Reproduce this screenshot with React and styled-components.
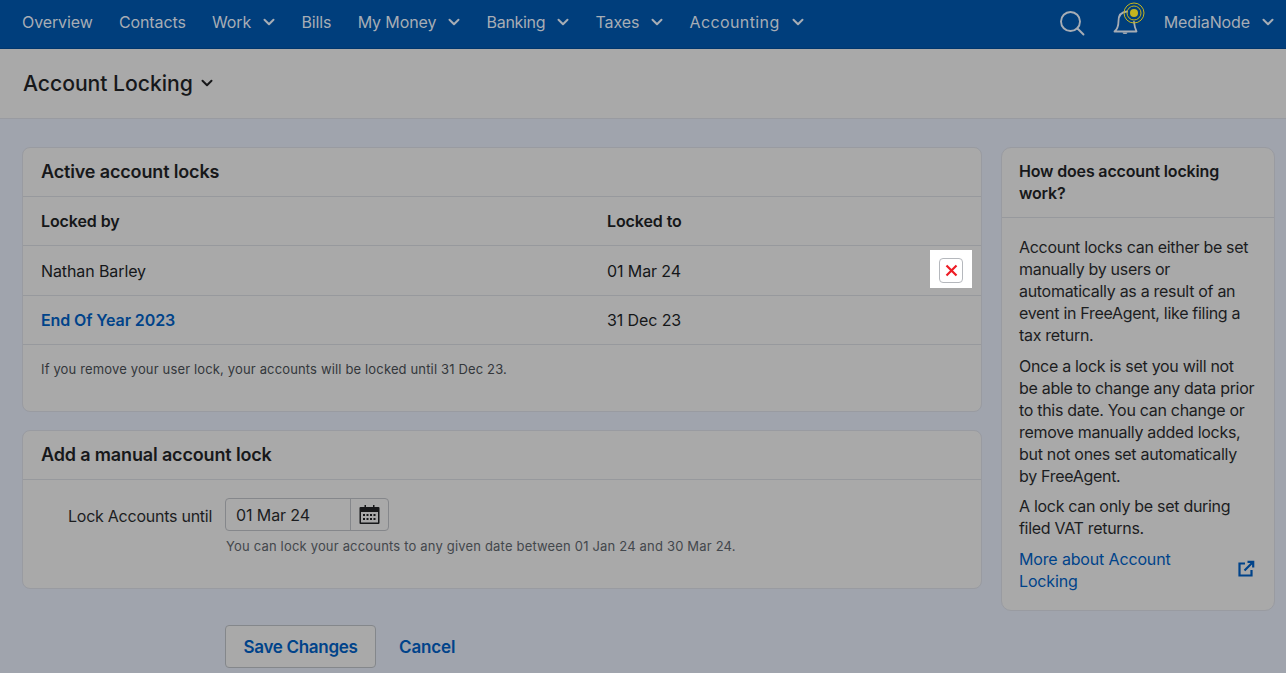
import React from "react";
import styled, { createGlobalStyle } from "styled-components";

const Global = createGlobalStyle`
  html, body { margin: 0; padding: 0; }
  body { background: #a0a4ad; font-family: Inter, "Liberation Sans", sans-serif; color: #151719; }
  * { box-sizing: border-box; }
`;
const Page = styled.div`width: 1286px; height: 673px; overflow: hidden; background: #a0a4ad;`;
const Nav = styled.nav`height: 49px; background: #003e7c; border-bottom: 1px solid #00366d; display: flex; align-items: center; padding: 0 12px 0 22px; color: #a7adb5; font-size: 16px; letter-spacing: -0.1px;`;
const NavItems = styled.div`display: flex; gap: 26.2px; flex: 1; align-items: center;`;
const NavItem = styled.span`display: inline-flex; align-items: center; gap: 12px; margin-top: -4px; letter-spacing: ${p => p.$track ?? -0.1}px;`;
const Chevron = styled.svg`width: ${p => p.$size || 12}px; height: ${p => p.$size || 12}px; flex: none;`;
const NavRight = styled.div`display: flex; align-items: center;`;
const SearchIcon = styled.svg`width: 26px; height: 26px; margin-top: -3px;`;
const Bell = styled.svg`width: 34px; height: 34px; margin: -14px 19px 0 26px;`;
const TitleBar = styled.header`height: 70px; background: #a9a9a9; border-bottom: 1px solid #999ba1; display: flex; align-items: center; padding: 0 22px 1px; gap: 8px;`;
const PageTitle = styled.h1`margin: 0; font-size: 21.2px; font-weight: 500; letter-spacing: -0.05px; color: #17181a; padding-left: 1px;`;
const Content = styled.main`display: grid; grid-template-columns: 960px 274px; gap: 19px; padding: 28px 0 0 22px; align-items: start;`;
const Column = styled.div`display: flex; flex-direction: column; gap: 18px;`;
const Card = styled.section`background: #a9a9a9; border: 1px solid #999ba1; border-radius: 8px; position: relative;`;
const CardTitle = styled.h2`margin: 0; height: 49px; padding: 0 18px 2px; display: flex; align-items: center; font-size: 18px; font-weight: 600; letter-spacing: -0.15px; color: #17181a; border-bottom: 1px solid #97999d;`;
const Row = styled.div`height: ${p => p.$h || 50}px; display: grid; grid-template-columns: 566px 1fr; align-items: center; padding: 0 18px; font-size: 16px; letter-spacing: -0.1px; border-bottom: 1px solid #97999d; position: relative; font-weight: ${p => p.$head ? 600 : 400};`;
const LockLink = styled.a`color: #00438a; font-weight: 600;`;
const Spotlight = styled.div`position: absolute; left: 907px; top: 4px; width: 42px; height: 38px; background: #fff; display: flex; padding: 8px 0 0 9px; z-index: 2;`;
const RemoveBtn = styled.button`width: 24px; height: 25px; padding: 0; background: #fff; border: 1px solid #b5b8bd; border-radius: 4px; display: flex; align-items: center; justify-content: center;`;
const Note = styled.p`margin: 0; padding: 16px 18px 34px; font-size: 13px; line-height: 16px; height: 66px; color: #33373b; letter-spacing: 0.15px;`;
const FormRow = styled.div`display: flex; padding: 18px 0 0 45px; height: 108px; align-items: flex-start;`;
const FieldLabel = styled.label`width: 157px; font-size: 16px; line-height: 36px; letter-spacing: -0.25px; color: #1c1d1f;`;
const FieldCol = styled.div`display: flex; flex-direction: column; gap: 7px;`;
const DateField = styled.div`width: 164px; height: 33px; border: 1px solid #85878b; border-radius: 4px; display: flex; align-items: center; font-size: 16px;`;
const DateValue = styled.span`flex: 1; padding-left: 10px; height: 100%; display: flex; align-items: center; border-right: 1px solid #85878b; color: #1c1d1f; letter-spacing: -0.1px;`;
const CalIcon = styled.svg`width: 37px; height: 21px;`;
const Hint = styled.div`font-size: 13px; line-height: 16px; color: #43474c; white-space: nowrap; letter-spacing: 0.18px; padding-left: 1px;`;
const Actions = styled.div`display: flex; align-items: center; gap: 23px; padding: 18px 0 0 203px;`;
const SaveBtn = styled.button`width: 151px; height: 43px; background: #a9a9a9; border: 1px solid #84878b; border-radius: 4px; color: #00438a; font: 600 17px Inter, sans-serif; letter-spacing: -0.3px;`;
const Cancel = styled.a`color: #00438a; font-size: 17px; font-weight: 600; letter-spacing: -0.15px;`;
const Side = styled.aside`background: #a9a9a9; border: 1px solid #999ba1; border-radius: 10px;`;
const SideTitle = styled.h3`margin: 0; padding: 12px 17px 13px; font-size: 16px; line-height: 22px; font-weight: 600; letter-spacing: -0.17px; color: #17181a; border-bottom: 1px solid #97999d;`;
const SideBody = styled.div`padding: 18px 18px 18px 17px; font-size: 16px; line-height: 22px; letter-spacing: -0.3px; color: #1c1d1f;`;
const Para = styled.p`margin: 0 0 8.5px;`;
const MoreRow = styled.div`display: flex; justify-content: space-between; align-items: center; color: #00438a; margin-top: 9px;`;
const MoreText = styled.span`width: 190px; letter-spacing: -0.15px;`;
const ExtIcon = styled.svg`width: 18px; height: 18px; margin: -3px 1px 0 0;`;

const Chev = ({ size, color = "#a7adb5", w = 2 }) => (
  <Chevron $size={size} viewBox="0 0 12 12" fill="none" stroke={color} strokeWidth={w} strokeLinecap="round" strokeLinejoin="round">
    <path d="M1.5 3.8 6 8.2l4.5-4.4" />
  </Chevron>
);

const nav = [
  { t: "Overview" },
  { t: "Contacts" },
  { t: "Work", c: 1 },
  { t: "Bills" },
  { t: "My Money", c: 1 },
  { t: "Banking", c: 1, track: -0.3 },
  { t: "Taxes", c: 1 },
  { t: "Accounting", c: 1, track: 0.4 },
];

export default function App() {
  return (
    <Page>
      <Global />
      <Nav>
        <NavItems>
          {nav.map(({ t, c, track }) => <NavItem key={t} $track={track}>{t}{c && <Chev />}</NavItem>)}
        </NavItems>
        <NavRight>
          <SearchIcon viewBox="0 0 26 26" fill="none" stroke="#a7adb5" strokeWidth="1.900" strokeLinecap="round"><circle cx="11.5" cy="11.5" r="9.5" /><path d="m18.5 18.5 6 6" /></SearchIcon>
          <Bell viewBox="0 0 34 34" fill="none">
            <path d="M3.500 31.500c2.500-2 4-4.500 4-10.500 0-5.500 3-9 8.500-9.500M23 22c.5 4.500 1.500 7.500 2.500 9.500H3.500" stroke="#a7adb5" strokeWidth="1.800" strokeLinecap="round" strokeLinejoin="round" />
            <path d="M11.500 32.500h5a2.500 1.500 0 0 1-5 0z" fill="#a7adb5" />
            <circle cx="23" cy="13" r="4" fill="#c4b41f" />
            <circle cx="23" cy="13" r="7" stroke="#c4b41f" strokeWidth="1" />
            <circle cx="23" cy="13" r="10" stroke="#c4b41f" strokeWidth="1" />
          </Bell>
          <NavItem>MediaNode<Chev /></NavItem>
        </NavRight>
      </Nav>
      <TitleBar>
        <PageTitle>Account Locking</PageTitle>
        <Chev size={12} color="#17181a" />
      </TitleBar>
      <Content>
        <Column>
          <Card>
            <CardTitle>Active account locks</CardTitle>
            <Row $head $h={49}><span>Locked by</span><span>Locked to</span></Row>
            <Row>
              <span>Nathan Barley</span><span>01 Mar 24</span>
              <Spotlight>
                <RemoveBtn aria-label="Remove">
                  <svg width="13" height="13" viewBox="0 0 13 13" stroke="#ee1c25" strokeWidth="2.200"><path d="M1.500 1.500l10 10M11.500 1.500l-10 10" /></svg>
                </RemoveBtn>
              </Spotlight>
            </Row>
            <Row $h={49}><LockLink>End Of Year 2023</LockLink><span>31 Dec 23</span></Row>
            <Note>If you remove your user lock, your accounts will be locked until 31 Dec 23.</Note>
          </Card>
          <Card>
            <CardTitle>Add a manual account lock</CardTitle>
            <FormRow>
              <FieldLabel>Lock Accounts until</FieldLabel>
              <FieldCol>
                <DateField>
                  <DateValue>01 Mar 24</DateValue>
                  <CalIcon viewBox="0 0 37 21" fill="#17181a">
                    <path fillRule="evenodd" d="M9.500 3h4V1h1.500v2h7V1h1.500v2h4a1 1 0 0 1 1 1v15a1 1 0 0 1-1 1h-18a1 1 0 0 1-1-1V4a1 1 0 0 1 1-1zm.500 5v10.500h17V8z" />
                    <path d="M12 10h2v2h-2zM15.500 10h2v2h-2zM19 10h2v2h-2zM22.500 10h2v2h-2zM12 14h2v2h-2zM15.500 14h2v2h-2zM19 14h2v2h-2zM22.500 14h2v2h-2z" />
                  </CalIcon>
                </DateField>
                <Hint>You can lock your accounts to any given date between 01 Jan 24 and 30 Mar 24.</Hint>
              </FieldCol>
            </FormRow>
          </Card>
          <Actions>
            <SaveBtn>Save Changes</SaveBtn>
            <Cancel>Cancel</Cancel>
          </Actions>
        </Column>
        <Side>
          <SideTitle>How does account locking work?</SideTitle>
          <SideBody>
            <Para>Account locks can either be set manually by users or automatically as a result of an event in FreeAgent, like filing a tax return.</Para>
            <Para>Once a lock is set you will not be able to change any data prior to this date. You can change or remove manually added locks, but not ones set automatically by FreeAgent.</Para>
            <Para>A lock can only be set during filed VAT returns.</Para>
            <MoreRow>
              <MoreText>More about Account Locking</MoreText>
              <ExtIcon viewBox="0 0 18 18" fill="none" stroke="#00438a" strokeWidth="2.200"><path d="M8 3.500H2.500v12h12V10M7.500 10.500 16 2M10.500 1.800h5.700v5.700" /></ExtIcon>
            </MoreRow>
          </SideBody>
        </Side>
      </Content>
    </Page>
  );
}
